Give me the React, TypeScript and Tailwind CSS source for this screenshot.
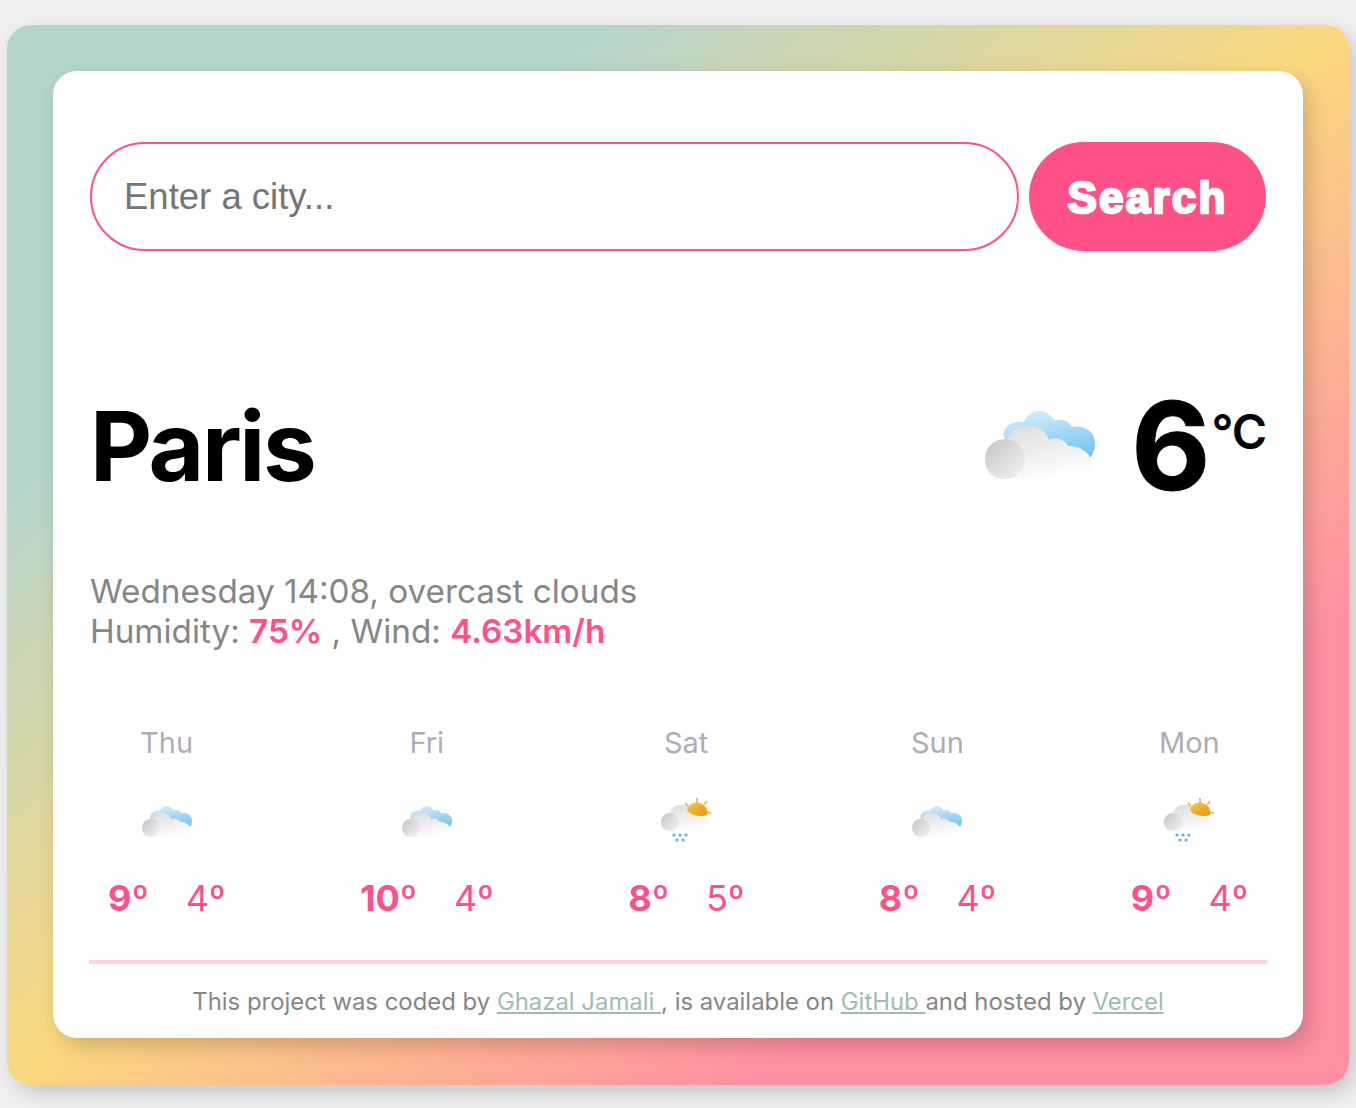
import React from "react";

const Defs = () => (
  <svg width="0" height="0" className="absolute">
    <defs>
      <linearGradient id="blue" x1="0.3" y1="0" x2="0.7" y2="1">
        <stop offset="0" stopColor="#d5ecfa" />
        <stop offset="1" stopColor="#76c5f2" />
      </linearGradient>
      <linearGradient id="white" x1="0.2" y1="0" x2="0.6" y2="1">
        <stop offset="0" stopColor="#dcdcdc" />
        <stop offset="1" stopColor="#ffffff" />
      </linearGradient>
      <linearGradient id="grey" x1="0" y1="0" x2="1" y2="1">
        <stop offset="0" stopColor="#c4c4c4" />
        <stop offset="1" stopColor="#f4f4f4" />
      </linearGradient>
      <linearGradient id="sun" x1="0" y1="0" x2="1" y2="1">
        <stop offset="0" stopColor="#f5c64a" />
        <stop offset="1" stopColor="#e09a10" />
      </linearGradient>
    </defs>
  </svg>
);

const Cloud = ({ className }: { className: string }) => (
  <svg viewBox="0 0 110 72" className={className}>
    <path
      d="M18 28 C20 16 30 14 39 15 C44 2 60 -1 70 14 C76 11 83 13 87 20 C98 18 110 24 110 36 C110 42 108 46 106 50 L30 50 Z"
      fill="url(#blue)"
    />
    <path
      d="M12 72 C3 72 0 62 0 56 C0 46 8 38 22 38 C22 24 32 19 44 19 C54 19 62 25 64 33 C72 29 80 33 83 39 C92 39 107 44 107 58 C107 66 102 72 94 72 Z"
      fill="url(#white)"
    />
    <circle cx="20" cy="52" r="20" fill="url(#grey)" />
  </svg>
);

const SunRain = ({ className }: { className: string }) => (
  <svg viewBox="0 0 50 44" className={className}>
    <path
      d="M6 34 C2 34 0 29 0 25 C0 19 4 15 9 15 C10 9 17 6 23 7 C29 8 31 11 32 16 C40 15 48 18 48 26 C48 30 46 34 42 34 Z"
      fill="url(#white)"
    />
    <circle cx="9" cy="24" r="9" fill="url(#grey)" />
    <g stroke="#f0bd4a" strokeWidth="1.8">
      <path d="M27 8 L24 5 M36 5 L36 0 M43 7 L46 3 M45 14 L50 15" />
    </g>
    <path d="M26 12 C27 6 33 4 38 5 C44 6 47 11 46 17 C40 19 30 18 26 12 Z" fill="url(#sun)" />
    <g fill="#5fb0e4">
      <circle cx="13" cy="37" r="1.6" />
      <circle cx="19" cy="37" r="1.6" />
      <circle cx="25" cy="37" r="1.6" />
      <circle cx="16" cy="42" r="1.6" />
      <circle cx="22" cy="42" r="1.6" />
    </g>
  </svg>
);

const days = [
  { d: "Thu", hi: "9", lo: "4", rain: false },
  { d: "Fri", hi: "10", lo: "4", rain: false },
  { d: "Sat", hi: "8", lo: "5", rain: true },
  { d: "Sun", hi: "8", lo: "4", rain: false },
  { d: "Mon", hi: "9", lo: "4", rain: true },
];

export default function App() {
  return (
    <div className="min-h-[1108px] bg-[#f0f0f0] pt-[25px] pl-[7px] pr-[7px] font-['Inter',sans-serif]">
      <Defs />
      <div className="h-[1060px] rounded-[24px] p-[46px] bg-[linear-gradient(to_bottom_right,#b5d5cb_22%,#fbd87f_50%,#ff8fa3_78%)] shadow-[6px_8px_20px_rgba(0,0,0,0.18)]">
        <div className="h-[967px] rounded-[24px] bg-white px-[37px] pt-[71px] shadow-[6px_8px_20px_rgba(0,0,0,0.18)]">
          <form className="flex gap-[10px]">
            <input
              readOnly
              placeholder="Enter a city..."
              className="h-[109px] w-[929px] rounded-[55px] border-2 border-[#ff5087] px-[32px] font-['Liberation_Sans',sans-serif] text-[36.5px] outline-none placeholder:text-[#757575]"
            />
            <button
              type="button"
              className="h-[109px] flex-1 rounded-[55px] bg-[#ff5087] pt-[3px] font-['Liberation_Sans',sans-serif] text-[44px] font-bold tracking-[2.2px] text-white [-webkit-text-stroke:2.5px_white]"
            >
              Search
            </button>
          </form>

          <div className="mt-[137px] flex items-center justify-between">
            <h1 className="text-[96px] leading-[116px] font-bold tracking-[-2.4px] text-black">Paris</h1>
            <div className="flex items-start">
              <Cloud className="mt-[16px] mr-[36px] h-[72px] w-[110px] blur-[0.5px]" />
              <span className="text-[122px] leading-[110px] font-bold text-black [-webkit-text-stroke:1px_black]">6</span>
              <span className="mt-[13px] ml-[1px] text-[48px] leading-[56px] font-semibold tracking-[-1px] text-black">°C</span>
            </div>
          </div>

          <div className="mt-[67px] text-[33.25px] leading-[40px] text-[#868686]">
            <div>Wednesday 14:08, overcast clouds</div>
            <div>
              Humidity: <span className="font-semibold text-[#ff5087]">75%</span> , Wind:{" "}
              <span className="font-semibold text-[#ff5087]">4.63km/h</span>
            </div>
          </div>

          <div className="mt-[75px] flex justify-between px-[18px]">
            {days.map((x) => (
              <div key={x.d} className="flex flex-col items-center">
                <div className="text-[29px] leading-[34px] text-[#b0acb4]">{x.d}</div>
                <div className="mt-[38px] h-[44px]">
                  {x.rain ? (
                    <SunRain className="h-[44px] w-[50px] blur-[0.4px]" />
                  ) : (
                    <Cloud className="mt-[6px] h-[33px] w-[50px] blur-[0.4px]" />
                  )}
                </div>
                <div className="mt-[34px] flex gap-[37px] text-[36px] leading-[44px] text-[#ff5087]">
                  <span className="font-bold">{x.hi}º</span>
                  <span>{x.lo}º</span>
                </div>
              </div>
            ))}
          </div>

          <div className="-mx-px mt-[40px] h-[4px] bg-[#ffd3dc]" />
          <p className="mt-[22px] text-center text-[23.9px] leading-[32px] text-[#868686]">
            This project was coded by{" "}
            <a href="#" className="text-[#9dbdb2] underline">Ghazal Jamali </a>, is available on{" "}
            <a href="#" className="text-[#9dbdb2] underline">GitHub </a>and hosted by{" "}
            <a href="#" className="text-[#9dbdb2] underline">Vercel</a>
          </p>
        </div>
      </div>
    </div>
  );
}
